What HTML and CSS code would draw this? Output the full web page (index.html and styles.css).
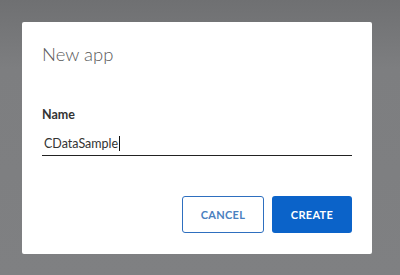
FILE: index.html
```html
<!DOCTYPE html>
<html lang="en">
<head>
  <meta charset="UTF-8" />
  <title>New app</title>
  <link rel="stylesheet" href="styles.css">
</head>
<body>
  <div class="dialog">
    <h2 class="title">New app</h2>
    <label class="label" for="name">Name</label>
    <div class="field">
      <span class="value">CDataSample</span><span class="caret"></span>
    </div>
    <div class="actions">
      <button class="btn btn-outline">CANCEL</button>
      <button class="btn btn-primary">CREATE</button>
    </div>
  </div>
</body>
</html>
```

FILE: styles.css
```css
* {
  box-sizing: border-box;
  margin: 0;
  padding: 0;
}

body {
  font-family: 'Lato', 'Liberation Sans', sans-serif;
  background: linear-gradient(180deg, #6f7072 0%, #7d7e80 25%, #7f8082 100%);
  width: 400px;
  height: 275px;
  padding: 22px;
  overflow: hidden;
}

.dialog {
  background: #fff;
  width: 350px;
  height: 232px;
  border-radius: 2px;
  padding: 20px 20px 0 20px;
  display: flex;
  flex-direction: column;
}

.title {
  font-weight: 300;
  font-size: 18.5px;
  color: #5a5a5a;
  line-height: 24px;
}

.label {
  display: block;
  font-weight: 700;
  font-size: 12.5px;
  color: #333;
  margin-top: 41px;
  line-height: 16px;
}

.field {
  margin-top: 8px;
  height: 25px;
  border-bottom: 1.5px solid #222;
  padding-left: 2px;
  display: flex;
  align-items: center;
}

.value {
  font-size: 12.5px;
  color: #333;
}

.caret {
  width: 1px;
  height: 15px;
  background: #111;
  margin-left: 1px;
}

.actions {
  display: flex;
  justify-content: flex-end;
  gap: 8px;
  margin-top: 40px;
}

.btn {
  height: 37px;
  border-radius: 3px;
  font-family: 'Lato', 'Liberation Sans', sans-serif;
  font-size: 11px;
  font-weight: 700;
  letter-spacing: 0.3px;
}

.btn-outline {
  width: 82px;
  background: #fff;
  border: 1px solid #2e6fbf;
  color: #4a7fbf;
}

.btn-primary {
  width: 80px;
  background: #0b63c9;
  border: none;
  color: #fff;
}
```
